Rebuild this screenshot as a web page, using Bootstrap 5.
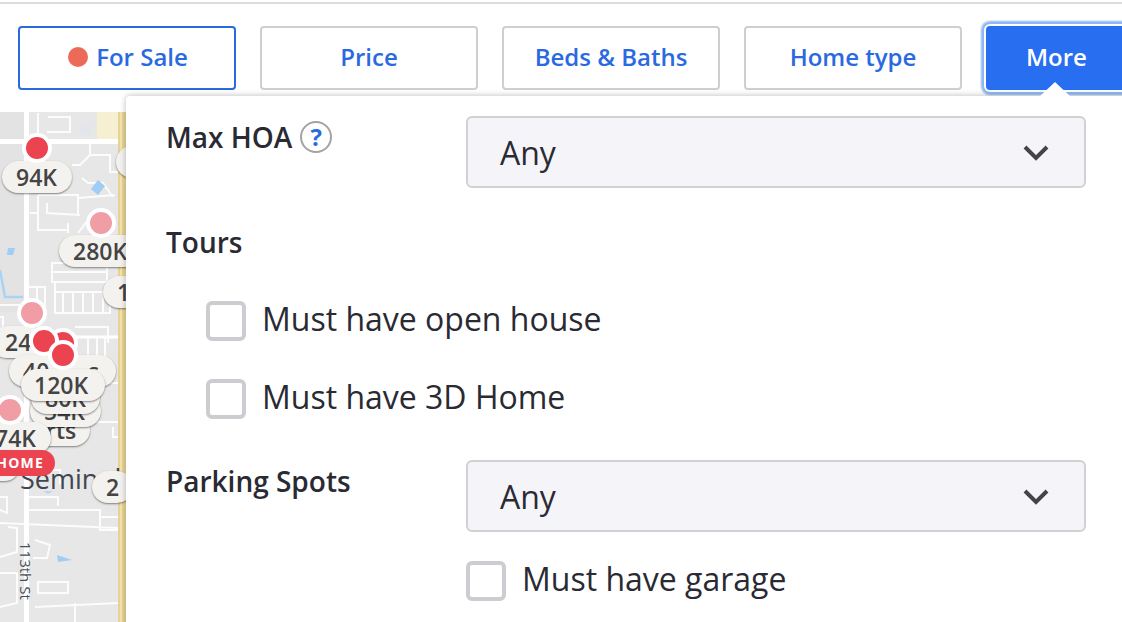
<!DOCTYPE html>
<html lang="en">
<head>
<meta charset="utf-8">
<title>More filters</title>
<link href="https://cdn.jsdelivr.net/npm/bootstrap@5.3.0/dist/css/bootstrap.min.css" rel="stylesheet">
<style>
html,body{width:1122px;height:622px;overflow:hidden;background:#fff;}
body{font-family:"Open Sans",sans-serif;color:#2a2a33;position:relative;}
.top-rule{height:4px;margin-top:2px;border-top:2px solid #dcdcdc;}
.tool-row{height:106px;padding:20px 0 0 18px;gap:24px;}
.fbtn{flex:0 0 218px;height:64px;font-size:24px;font-weight:600;color:#2a6ae0;background:#fff;border:2px solid #cfcfcf;border-radius:4px;padding:0 0 2px;display:flex;align-items:center;justify-content:center;gap:8px;line-height:1;}
.fbtn.on{border-color:#2a6ae0;padding-left:2px;}
.fbtn.more{flex:0 0 160px;background:#276ef1;border-color:#276ef1;color:#fff;margin-left:0;box-shadow:0 0 0 2px #fff,0 0 2px 5px #8db6f3;justify-content:flex-start;padding-left:38px;}
.sale-dot{width:20px;height:20px;border-radius:50%;background:#ec6a58;display:inline-block;}
.map-area{position:absolute;left:0;top:112px;width:126px;height:510px;background:#e7e7e7;overflow:hidden;}
.map-area svg{display:block;}
.pin{position:absolute;width:30px;height:30px;border-radius:50%;border:4px solid #fff;background:#eb4350;}
.pin.soft{background:#f09da6;}
.plabel{position:absolute;height:32px;padding:0 14px;background:#f4f2ef;border-radius:16px;box-shadow:0 1px 2px rgba(0,0,0,.45);font-size:23px;font-weight:600;line-height:32px;color:#444;white-space:nowrap;}
.home-tag{position:absolute;left:-12px;top:338px;width:67px;height:26px;border-radius:13px;background:#eb4350;color:#fff;font-size:14px;font-weight:700;letter-spacing:1.2px;line-height:26px;text-align:right;padding-right:11px;}
.road-place{font-size:27px;fill:#3f4650;}
.road-name{font-size:15px;fill:#47505a;}
.panel{position:absolute;left:126px;top:96px;width:1010px;height:540px;background:#fff;border-top-left-radius:4px;box-shadow:0 0 6px rgba(0,0,0,.28);padding:20px 50px 0 41px;}
.panel-notch{position:absolute;left:913px;top:-14px;width:0;height:0;border-left:16px solid transparent;border-right:16px solid transparent;border-bottom:15px solid #fff;}
.fl-label{font-size:28px;font-weight:600;line-height:36px;color:#2a2a33;margin-left:-1px;}
.sel-col{flex:0 0 620px;margin-left:auto;}
.sel-box{height:72px;background:#f4f4f9;border:2px solid #d1d1d5;border-radius:6px;padding:2px 34px 0 32px;font-size:32px;color:#2a2a33;}
.help-dot{width:32px;height:32px;border-radius:50%;border:2px solid #a3a3a3;color:#2a6ae0;font-size:24px;font-weight:700;line-height:27px;text-align:center;margin:2px 0 0 8px;}
.chk-line{height:42px;gap:16px;font-size:32px;line-height:42px;color:#2a2a33;}
.chk-line span:last-child{padding-bottom:4px;}
.box-mark{flex:0 0 40px;height:40px;border:4px solid #cdcdd1;border-radius:6px;background:#fff;}
.row-hoa{height:72px;padding-top:3px;}
.row-tours{margin-top:36px;}
.chk-first{margin-top:40px;margin-left:39px;}
.chk-second{margin-top:36px;margin-left:39px;}
.row-park{margin-top:40px;}
.chk-garage{margin-top:28px;margin-left:299px;}
</style>
</head>
<body>
<div class="top-rule"></div>
<div class="tool-row d-flex">
  <button class="fbtn on" type="button"><span class="sale-dot"></span>For Sale</button>
  <button class="fbtn" type="button">Price</button>
  <button class="fbtn" type="button">Beds &amp; Baths</button>
  <button class="fbtn" type="button">Home type</button>
  <button class="fbtn more" type="button">More</button>
</div>

<div class="map-area">
  <svg width="126" height="510" viewBox="0 112 126 510" fill="none">
    <rect x="97" y="112" width="21" height="28" fill="#f7efd2"/>
    <rect x="80" y="125" width="10" height="8" fill="#e0e6ec"/>
    <rect x="0" y="112" width="25" height="200" fill="#e3e3e3"/>
    <g stroke="#fff" stroke-width="2" stroke-opacity=".85">
      <path d="M38 113V133M48 117H70V132H47M90 142V155L80 165H72M90 155H110V172H118M82 178L88 183H103L113 197"/>
      <path d="M38 195H78V215M38 195V230H67M47 203V213L80 215M30 213H38M78 198L115 195M68 223V233M78 233L88 220"/>
      <path d="M52 263H107V282H52ZM52 272H107M55 282V313H110V292H55M63 292V313M73 292V313M83 292V313M93 292V313M103 292V313"/>
      <path d="M28 287H45V307M37 287V303M0 305H20M0 317H3V330"/>
      <path d="M75 327H108V343M88 338V357M97 338V357M105 338V357"/>
      <path d="M103 383H118M90 422H118M113 427V437H118"/>
      <path d="M0 497H7V513L0 510M28 510H100V530H118M100 517H118M0 523L118 528M8 527L17 528V552L0 557"/>
      <path d="M35 540L50 545 47 558H33M38 582H68V593H38ZM35 607L118 603M75 603V622M0 573H17V603L0 607"/>
      <path d="M30 470H60V484M28 497H58V506"/>
    </g>
    <path d="M26.500 112V622" stroke="#fff" stroke-width="5"/>
    <path d="M0 141.500H118" stroke="#fff" stroke-width="5"/>
    <path d="M75 337H118" stroke="#fff" stroke-width="3"/>
    <path d="M91 189L98 180 105 186 98 195Z" fill="#9fcdf3"/>
    <path d="M8 248H15L13 255H7Z" fill="#9fcdf3"/>
    <path d="M0 270L5 297H23" stroke="#a9d3f5" stroke-width="2.500"/>
    <path d="M57 555L72 560 58 562Z" fill="#9fcdf3"/>
    <path d="M43 491H53L48 494Z" fill="#b8d6f0"/>
    <rect x="118" y="112" width="8" height="510" fill="#e7d494"/>
    <rect x="120" y="112" width="2" height="510" fill="#f3e4b0"/>
    <text class="road-place" x="20" y="489">Seminole</text>
    <text class="road-name" transform="translate(20 542) rotate(90)">113th St</text>
  </svg>
  <div class="plabel" style="left:2px;top:49px;width:70px">94K</div>
  <div class="pin" style="left:22px;top:21px"></div>
  <div class="plabel" style="left:116px;top:34px;width:40px"></div>
  <div class="plabel" style="left:59px;top:123px">280K</div>
  <div class="pin soft" style="left:86px;top:96px"></div>
  <div class="plabel" style="left:103px;top:164px;padding-left:14px">1</div>
  <div class="plabel" style="left:-9px;top:214px">24</div>
  <div class="pin soft" style="left:17px;top:186px"></div>
  <div class="plabel" style="left:9px;top:243px;padding-left:14px">40</div>
  <div class="plabel" style="left:60px;top:243px;width:56px;padding-left:28px">s</div>
  <div class="pin" style="left:48px;top:216px;width:30px;height:30px"></div>
  <div class="plabel" style="left:32px;top:302px;width:58px;padding-left:14px">rts</div>
  <div class="plabel" style="left:30px;top:283px;width:71px;padding-left:14px">54K</div>
  <div class="plabel" style="left:31px;top:270px;width:69px;padding-left:14px">80K</div>
  <div class="plabel" style="left:21px;top:257px;width:84px;padding-left:13px">120K</div>
  <div class="pin" style="left:29px;top:214px"></div>
  <div class="pin" style="left:48px;top:228px"></div>
  <div class="plabel" style="left:-19px;top:310px;width:70px">74K</div>
  <div class="pin soft" style="left:-5px;top:283px"></div>
  <div class="plabel" style="left:-20px;top:338px;width:40px;height:31px"></div>
  <div class="home-tag">HOME</div>
  <div class="plabel" style="left:92px;top:359px;padding-left:14px">2</div>
</div>

<div class="panel">
  <span class="panel-notch"></span>
  <div class="d-flex">
    <div class="row-hoa d-flex align-items-start">
      <span class="fl-label">Max HOA</span>
      <span class="help-dot">?</span>
    </div>
    <div class="sel-col">
      <div class="sel-box d-flex align-items-center justify-content-between">
        <span>Any</span>
        <svg width="28" height="18" viewBox="0 0 28 18" fill="none"><path d="M3 3L14 14 25 3" stroke="#444" stroke-width="4"/></svg>
      </div>
    </div>
  </div>
  <div class="fl-label row-tours">Tours</div>
  <div class="chk-line chk-first d-flex align-items-center"><span class="box-mark"></span><span>Must have open house</span></div>
  <div class="chk-line chk-second d-flex align-items-center"><span class="box-mark"></span><span>Must have 3D Home</span></div>
  <div class="d-flex row-park">
    <div class="row-hoa"><span class="fl-label">Parking Spots</span></div>
    <div class="sel-col">
      <div class="sel-box d-flex align-items-center justify-content-between">
        <span>Any</span>
        <svg width="28" height="18" viewBox="0 0 28 18" fill="none"><path d="M3 3L14 14 25 3" stroke="#444" stroke-width="4"/></svg>
      </div>
    </div>
  </div>
  <div class="chk-line chk-garage d-flex align-items-center"><span class="box-mark"></span><span>Must have garage</span></div>
</div>
<script src="https://cdn.jsdelivr.net/npm/bootstrap@5.3.0/dist/js/bootstrap.bundle.min.js"></script>
</body>
</html>
